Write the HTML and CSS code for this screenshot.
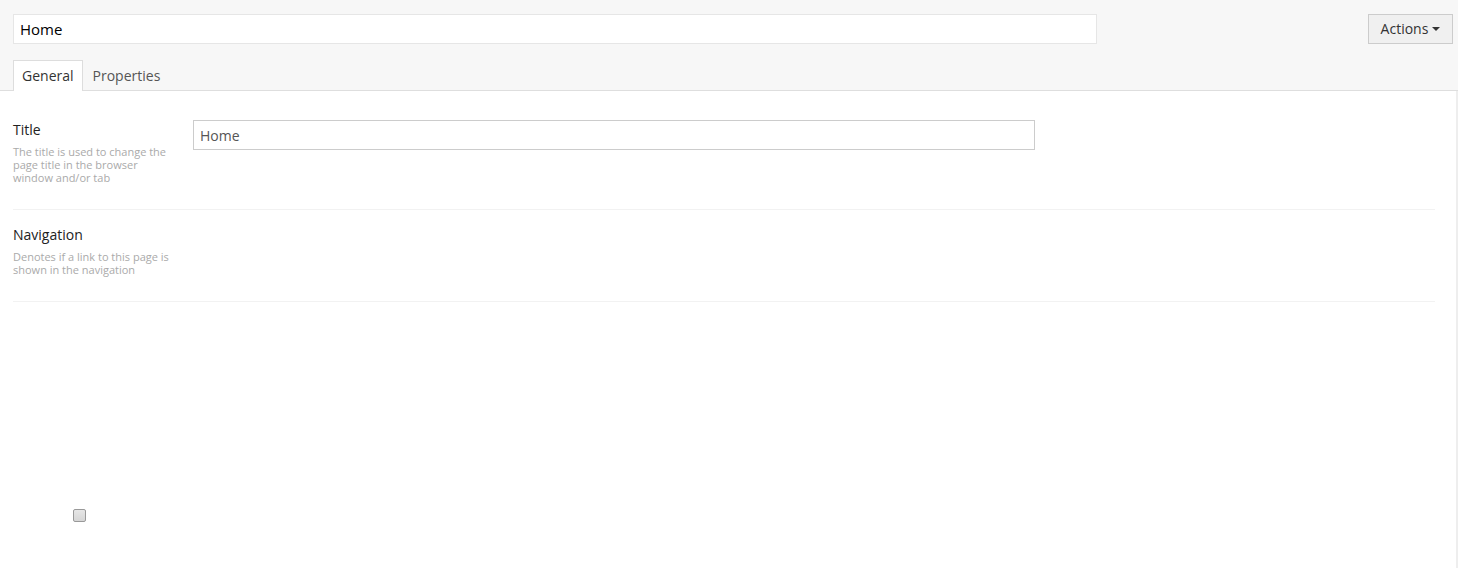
FILE: index.html
```html
<!DOCTYPE html>
<html lang="en">
<head>
    <meta charset="UTF-8">
    <meta name="viewport" content="width=device-width, initial-scale=1.0">
    <title>Page Editor</title>
    <link rel="stylesheet" href="styles.css">
</head>
<body>
    <div class="header">
        <div class="header-top">
            <input type="text" class="page-name" value="Home">
            <button type="button" class="actions">Actions <span class="caret"></span></button>
        </div>
        <ul class="tabs">
            <li class="tab active">General</li>
            <li class="tab">Properties</li>
        </ul>
    </div>

    <div class="content">
        <form class="fields">
            <div class="field-row">
                <div class="field-label">
                    <label for="title">Title</label>
                    <p class="hint">The title is used to change the page title in the browser window and/or tab</p>
                </div>
                <div class="field-input">
                    <input type="text" id="title" value="Home">
                </div>
            </div>
            <div class="field-row">
                <div class="field-label">
                    <label>Navigation</label>
                    <p class="hint">Denotes if a link to this page is shown in the navigation</p>
                </div>
                <div class="field-input"></div>
            </div>
        </form>
        <div class="nav-toggle">
            <input type="checkbox" id="navigation">
        </div>
    </div>
</body>
</html>
```

FILE: styles.css
```css
/* Base */
html, body {
    height: 100%;
}

body {
    margin: 0;
    font-family: 'Open Sans', 'Liberation Sans', sans-serif;
    color: #333;
    background: #fff;
    display: flex;
    flex-direction: column;
}

/* Header with page name and tabs */
.header {
    background: #f7f7f7;
    border-bottom: 1px solid #dedede;
    padding: 14px 5px 0 13px;
}

.header-top {
    display: flex;
    justify-content: space-between;
    align-items: flex-start;
}

.page-name {
    width: 1084px;
    height: 30px;
    box-sizing: border-box;
    border: 1px solid #e6e6e6;
    background: #fff;
    padding: 0 6px;
    font-family: inherit;
    font-size: 15px;
    font-weight: 400;
    color: #000;
    outline: none;
}

.actions {
    width: 85px;
    height: 30px;
    background: #f0f0f0;
    border: 1px solid #cccccc;
    border-radius: 0;
    font-family: inherit;
    font-size: 14px;
    color: #333;
    padding: 0 0 1px;
    display: flex;
    align-items: center;
    justify-content: center;
    gap: 4px;
}

.caret {
    width: 0;
    height: 0;
    border-left: 4px solid transparent;
    border-right: 4px solid transparent;
    border-top: 4px solid #333;
}

/* Tabs */
.tabs {
    list-style: none;
    margin: 16px 0 -1px;
    padding: 0;
    display: flex;
}

.tab {
    font-size: 14px;
    line-height: 29px;
    padding: 0 8px;
    color: #555;
    border: 1px solid transparent;
    border-bottom: none;
    margin-right: 1px;
}

.tab.active {
    background: #fff;
    color: #333;
    border-color: #dddddd;
    height: 30px;
}

/* Content area */
.content {
    flex: 1;
    padding: 14px 21px 0 13px;
    border-right: 2px solid #eeeeee;
}

.field-row {
    display: flex;
    padding: 15px 0 25px;
    border-bottom: 1px solid #f2f2f2;
}

.field-label {
    width: 180px;
    flex-shrink: 0;
}

.field-label label {
    display: block;
    font-size: 14px;
    font-weight: 400;
    line-height: 20px;
    color: #222;
}

.hint {
    margin: 5px 0 0;
    width: 160px;
    font-size: 11px;
    line-height: 13px;
    color: #aaa;
}

.field-input input {
    width: 842px;
    height: 30px;
    box-sizing: border-box;
    border: 1px solid #cccccc;
    padding: 0 6px;
    font-family: inherit;
    font-size: 14px;
    color: #555;
    outline: none;
}

/* Stray navigation checkbox */
.nav-toggle {
    padding: 203px 0 0 60px;
}

.nav-toggle input {
    appearance: none;
    width: 13px;
    height: 13px;
    margin: 0;
    border: 1px solid #999;
    border-radius: 2px;
    background: linear-gradient(#e6e6e6, #d6d6d6);
}
```
